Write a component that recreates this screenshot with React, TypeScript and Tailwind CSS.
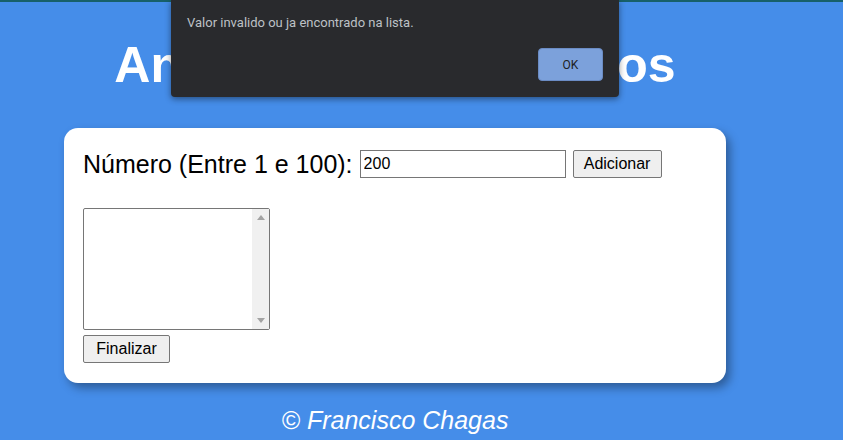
export default function App() {
  return (
    <div className="relative min-h-[440px] w-[843px] overflow-hidden bg-[#458de9] font-['Liberation_Sans',Arial,sans-serif] text-black">
      <div className="h-[2px] w-full bg-[#17606a]" />

      <div className="ml-[64px] w-[662px]">
        <h1 className="pt-[34px] text-center text-[50px] font-bold leading-[58px] text-white">
          Analisador de Números
        </h1>

        <section className="mt-[34px] rounded-[14px] bg-white px-[19px] pb-[20px] pt-[20px] shadow-[4px_5px_10px_rgba(0,0,0,0.35)]">
          <div className="flex h-[32px] items-center">
            <label className="text-[25px] leading-[28px]">Número (Entre 1 e 100):</label>
            <input
              type="text"
              defaultValue="200"
              className="ml-[7px] h-[28px] w-[206px] border border-[#767676] px-[3px] text-[16px] outline-none"
            />
            <button className="ml-[7px] h-[28px] w-[89px] rounded-[2px] border border-[#767676] bg-[#efefef] text-[16px] leading-none">
              Adicionar
            </button>
          </div>

          <div className="mt-[28px] flex h-[122px] w-[187px] rounded-[2px] border border-[#767676]">
            <div className="flex-1" />
            <div className="flex w-[17px] flex-col items-center justify-between bg-[#f0f0f0] py-[6px]">
              <svg width="8" height="5" viewBox="0 0 8 5">
                <path d="M0 5 L4 0 L8 5 Z" fill="#a3a3a3" />
              </svg>
              <svg width="8" height="5" viewBox="0 0 8 5">
                <path d="M0 0 L4 5 L8 0 Z" fill="#a3a3a3" />
              </svg>
            </div>
          </div>

          <button className="mt-[5px] h-[28px] w-[87px] rounded-[2px] border border-[#767676] bg-[#efefef] text-[16px] leading-none">
            Finalizar
          </button>
        </section>

        <footer className="mt-[23px] text-center text-[25px] italic leading-[28px] text-white">
          © Francisco Chagas
        </footer>
      </div>

      {/* alert dialog */}
      <div className="absolute left-[171px] top-0 h-[97px] w-[448px] rounded-b-[4px] bg-[#292a2d] shadow-[0_2px_6px_rgba(0,0,0,0.45)] font-['Roboto',sans-serif]">
        <p className="pl-[16px] pt-[14px] text-[13px] leading-[17px] text-[#bdc1c6]">
          Valor invalido ou ja encontrado na lista.
        </p>
        <div className="mt-[17px] flex justify-end pr-[16px]">
          <button className="h-[33px] w-[65px] rounded-[4px] border border-[#6b8cc4] bg-[#7ca1db] text-[12px] text-[#202124]">
            OK
          </button>
        </div>
      </div>
    </div>
  );
}
